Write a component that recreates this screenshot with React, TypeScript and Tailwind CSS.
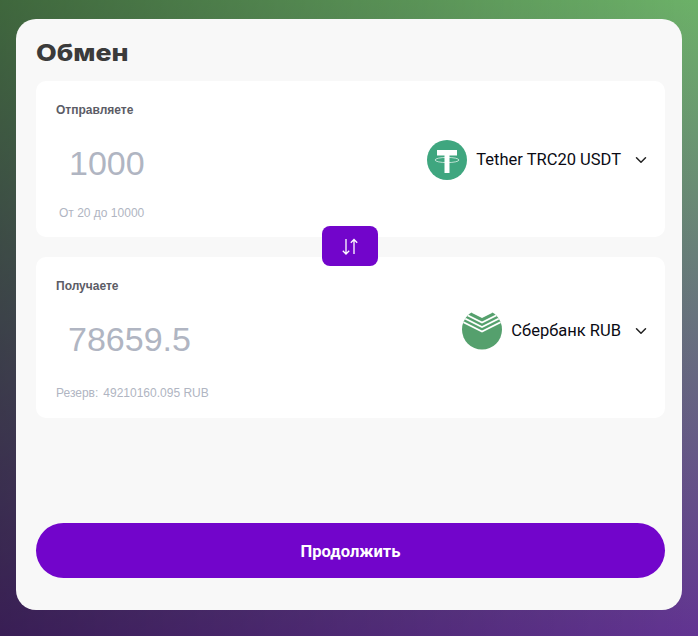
import React from 'react'
import { ChevronDown } from 'lucide-react'

const TetherIcon = () => (
  <svg width="40" height="40" viewBox="0 0 40 40" className="shrink-0">
    <circle cx="20" cy="20" r="20" fill="#3fa67f" />
    <path d="M10 10h20v5.500h-7.500V33h-5V15.500H10z" fill="#fff" />
    <ellipse cx="20" cy="20" rx="12" ry="2.600" fill="none" stroke="#fff" strokeOpacity="0.65" strokeWidth="1" />
  </svg>
)

const SberIcon = () => (
  <svg width="40" height="38" viewBox="0 0 40 38" className="shrink-0">
    <defs>
      <clipPath id="sber-circle">
        <circle cx="20" cy="17.500" r="20" />
      </clipPath>
    </defs>
    <g clipPath="url(#sber-circle)">
      <rect width="40" height="38" fill="#55a06d" />
      <path d="M-2 -5 20 6 42 -5V-12H-2Z" fill="#fff" />
      <path d="M-2 8.500 20 19.500 42 8.500M-2 4 20 15 42 4M-2 -.5 20 10.500 42 -.5" fill="none" stroke="#fff" strokeWidth="1.800" />
    </g>
  </svg>
)

const SwapIcon = () => (
  <svg width="18" height="18" viewBox="0 0 18 18" fill="none" stroke="#fff" strokeWidth="1.300">
    <path d="M5 2v15M1.800 13.800 5 17l3.200-3.200" />
    <path d="M13 17V2.500M9.800 5.700 13 2.500l3.200 3.200" />
  </svg>
)

const Selector = ({ icon, name }: { icon: React.ReactNode; name: string }) => (
  <div className="flex items-center">
    {icon}
    <span className="mt-[1px] ml-[9px] font-['Roboto',sans-serif] text-[16.500px] text-[#0b0b14]">{name}</span>
    <ChevronDown size={18} strokeWidth={2} className="ml-[11px] text-[#222]" />
  </div>
)

export default function App() {
  return (
    <div className="min-h-screen overflow-hidden bg-[linear-gradient(to_left,rgba(0,0,0,0),rgba(0,0,0,0.42)),linear-gradient(to_bottom,#6cb168,#623392)] pt-[19px] px-[16px] font-['Liberation_Sans',sans-serif]">
      <div className="flex h-[591px] w-[666px] flex-col rounded-[20px] bg-[#f8f8f8] pr-[17px] pl-[20px]">
        <h1 className="mt-[17px] h-[45px] w-fit origin-left scale-x-[1.14] font-['Inter',sans-serif] text-[23.500px] leading-[34px] font-extrabold text-[#3b3b3b]">
          Обмен
        </h1>

        <div className="relative flex flex-col gap-[20px]">
          <section className="h-[156px] rounded-[10px] bg-white pt-[21px] pr-[15px] pl-[20px]">
            <p className="text-[12px] leading-[16px] font-bold text-[#5c5c66]">Отправляете</p>
            <div className="mt-[22px] flex items-start justify-between">
              <span className="mt-[3px] pl-[13px] text-[34px] leading-[40px] text-[#b0b5c2]">1000</span>
              <Selector icon={<TetherIcon />} name="Tether TRC20 USDT" />
            </div>
            <p className="mt-[22px] pl-[3px] text-[12px] leading-[16px] text-[#b0b5c2]">От 20 до 10000</p>
          </section>

          <button className="absolute top-[145px] left-[286px] flex h-[40px] w-[56px] items-center justify-center rounded-[8px] bg-[#7205cb]">
            <SwapIcon />
          </button>

          <section className="h-[161px] rounded-[10px] bg-white pt-[21px] pr-[15px] pl-[20px]">
            <p className="text-[12px] leading-[16px] font-bold text-[#5c5c66]">Получаете</p>
            <div className="mt-[18px] flex items-start justify-between">
              <span className="mt-[7px] pl-[12px] text-[34px] leading-[40px] text-[#b0b5c2]">78659.5</span>
              <Selector icon={<SberIcon />} name="Сбербанк RUB" />
            </div>
            <p className="mt-[26px] text-[12px] leading-[16px] text-[#b0b5c2]">
              Резерв:<span className="ml-[5px]">49210160.095 RUB</span>
            </p>
          </section>
        </div>

        <button className="mt-[105px] h-[55px] w-full rounded-[28px] bg-[#7205cb] pt-[3px] font-['Roboto',sans-serif] text-[16.500px] font-bold text-white">
          Продолжить
        </button>
      </div>
    </div>
  )
}
